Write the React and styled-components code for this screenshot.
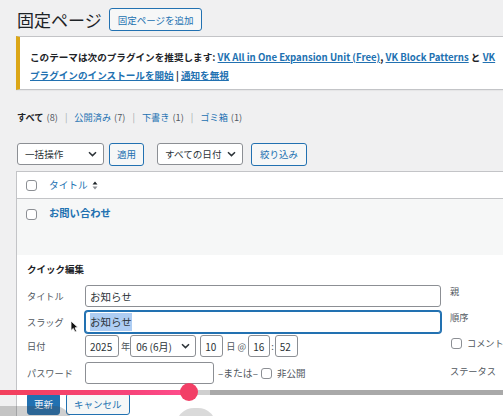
import React from "react";
import styled, { createGlobalStyle } from "styled-components";

const GlobalStyle = createGlobalStyle`
  html, body {
    margin: 0;
    padding: 0;
    background: #f0f0f1;
    overflow: hidden;
    width: 503px;
    height: 416px;
  }
  body {
    font-family: "Noto Sans CJK JP", "Noto Sans", sans-serif;
    color: #1d2327;
    -webkit-font-smoothing: antialiased;
  }
`;

const Screen = styled.div`
  position: relative;
  width: 503px;
  height: 416px;
  overflow: hidden;
`;

const Wrap = styled.div`
  width: 640px;
  padding-left: 16px;
  box-sizing: border-box;
`;

const HeaderRow = styled.div`
  display: flex;
  align-items: center;
  gap: 7px;
  height: 23px;
  margin-top: 8px;
`;

const PageTitle = styled.h1`
  margin: 0 0 0 1px;
  font-size: 17px;
  line-height: 23px;
  font-weight: 400;
  color: #1d2327;
`;

const Button = styled.span`
  display: inline-flex;
  align-items: center;
  justify-content: center;
  box-sizing: border-box;
  height: ${(p) => p.$h || 22}px;
  padding: 0 ${(p) => p.$px || 7}px;
  border: 1px solid #2271b1;
  border-radius: 3px;
  background: ${(p) => (p.$primary ? "#2271b1" : "#f6f7f7")};
  color: ${(p) => (p.$primary ? "#fff" : "#2271b1")};
  font-size: ${(p) => p.$fs || 9.5}px;
  white-space: nowrap;
  margin-left: ${(p) => p.$ml || 0}px;
`;

const Notice = styled.div`
  margin-top: 5px;
  background: #fff;
  border: 1px solid #c3c4c7;
  border-left: 4px solid #dba617;
  padding: 11px 10px 5px 10px;
  box-shadow: 0 1px 1px rgba(0, 0, 0, 0.04);
`;

const NoticeLine = styled.div`
  font-size: 9.6px;
  line-height: 18px;
  font-weight: 700;
  white-space: nowrap;
  color: #1d2327;
`;

const Link = styled.a`
  color: #2271b1;
  text-decoration: underline;
`;

const Subsub = styled.div`
  margin-top: 20px;
  margin-left: 1px;
  font-size: 9.2px;
  line-height: 14px;
  color: #50575e;
  white-space: nowrap;
  display: flex;
  gap: 5px;
`;

const SubLink = styled.span`
  color: ${(p) => (p.$current ? "#1d2327" : "#2271b1")};
  font-weight: ${(p) => (p.$current ? 700 : 400)};
`;

const Count = styled.span`
  color: #50575e;
  margin-left: 3px;
`;

const Sep = styled.span`
  color: #a7aaad;
  margin: 0 2px;
`;

const TableNav = styled.div`
  display: flex;
  align-items: center;
  margin-top: 19px;
  margin-left: 1px;
  height: 22px;
`;

const Select = styled.div`
  display: flex;
  align-items: center;
  justify-content: space-between;
  box-sizing: border-box;
  width: ${(p) => p.$w}px;
  height: ${(p) => p.$h || 22}px;
  padding: 0 ${(p) => p.$pr || 6}px 0 ${(p) => p.$pl || 7}px;
  margin-left: ${(p) => p.$ml || 0}px;
  margin-right: ${(p) => p.$mr || 0}px;
  border: 1px solid #8c8f94;
  border-radius: 3px;
  background: #fff;
  color: #2c3338;
  font-size: ${(p) => p.$fs || 9.6}px;
  white-space: nowrap;
  flex: none;
`;

const Chevron = () => (
  <svg width="9" height="6" viewBox="0 0 9 6" fill="none">
    <path d="M1 1.2 L4.5 4.6 L8 1.2" stroke="#2c3338" strokeWidth="1.5" />
  </svg>
);

const Table = styled.div`
  margin-top: 6px;
  background: #fff;
  border: 1px solid #c3c4c7;
  border-bottom: none;
`;

const HeadRow = styled.div`
  display: flex;
  align-items: center;
  height: 26px;
  padding-left: 9px;
  border-bottom: 1px solid #c3c4c7;
  background: #fff;
`;

const DataRow = styled.div`
  height: 56px;
  background: #f6f7f7;
  padding-left: 9px;
  padding-top: 8px;
  box-sizing: border-box;
  display: flex;
  align-items: flex-start;
`;

const Check = styled.span`
  display: inline-block;
  box-sizing: border-box;
  width: 11px;
  height: 11px;
  border: 1px solid #8c8f94;
  border-radius: 3px;
  background: #fff;
  flex: none;
  margin-top: ${(p) => p.$mt || 0}px;
  margin-left: ${(p) => p.$ml || 0}px;
`;

const HeadTitle = styled.span`
  margin-left: 12px;
  color: #2271b1;
  font-size: 9.7px;
  display: inline-flex;
  align-items: center;
  gap: 4px;
`;

const RowTitle = styled.span`
  margin-left: 12px;
  color: #2271b1;
  font-size: 10.3px;
  font-weight: 700;
  line-height: 14px;
  margin-top: -1px;
`;

const SortIcon = () => (
  <svg width="6" height="9" viewBox="0 0 6 9">
    <path d="M0.5 3.6 L3 0.5 L5.5 3.6 Z" fill="#1d2327" />
    <path d="M0.5 5.4 L3 8.5 L5.5 5.4 Z" fill="#8c8f94" />
  </svg>
);

const QuickEdit = styled.div`
  background: #fff;
  padding: 7px 0 0 10px;
  height: 170px;
  box-sizing: border-box;
`;

const QuickHeading = styled.div`
  font-size: 9.5px;
  font-weight: 700;
  line-height: 14px;
  color: #1d2327;
`;

const EditGrid = styled.div`
  display: flex;
  margin-top: 9px;
`;

const LeftCol = styled.div`
  width: 414px;
  flex: none;
`;

const RightCol = styled.div`
  margin-left: 9px;
`;

const FieldRow = styled.div`
  display: flex;
  align-items: center;
  height: 22px;
  margin-bottom: ${(p) => p.$mb ?? 4}px;
`;

const Label = styled.span`
  width: 58px;
  flex: none;
  font-size: 9.2px;
  color: #50575e;
  white-space: nowrap;
`;

const TextBox = styled.div`
  display: flex;
  align-items: center;
  box-sizing: border-box;
  width: ${(p) => p.$w}px;
  height: 22px;
  padding: 0 ${(p) => p.$px || 4}px;
  margin-left: ${(p) => p.$ml || 0}px;
  border: 1px solid ${(p) => (p.$focus ? "#2271b1" : "#8c8f94")};
  box-shadow: ${(p) => (p.$focus ? "0 0 0 1px #2271b1" : "none")};
  border-radius: 3px;
  background: #fff;
  color: #2c3338;
  font-size: ${(p) => p.$fs || 10.5}px;
  white-space: nowrap;
  flex: none;
`;

const Selected = styled.span`
  background: #aecdf3;
  line-height: 18px;
`;

const Inline = styled.span`
  font-size: ${(p) => p.$fs || 9.2}px;
  color: #50575e;
  margin: 0 ${(p) => p.$mr ?? 2}px 0 ${(p) => p.$ml ?? 2}px;
  white-space: nowrap;
  flex: none;
`;

const SideItem = styled.div`
  display: flex;
  align-items: center;
  gap: 5px;
  font-size: 9.2px;
  color: #50575e;
  height: 14px;
  margin-top: ${(p) => p.$mt || 0}px;
  white-space: nowrap;
`;

const Actions = styled.div`
  display: flex;
  gap: 6px;
  margin-top: 5px;
`;

/* video player overlay along the bottom */
const Progress = styled.div`
  position: absolute;
  left: 0;
  right: 0;
  top: 390px;
  height: 5px;
  display: flex;
`;

const Played = styled.div`
  width: 189px;
  background: linear-gradient(90deg, #f2405c 0%, #f7447a 70%, #ff4e8e 100%);
`;

const Buffered = styled.div`
  width: 21px;
  background: #cfcfcf;
`;

const Remaining = styled.div`
  flex: 1;
  background: #a9a9a9;
`;

const Scrubber = styled.div`
  position: absolute;
  left: 180px;
  top: 383px;
  width: 18px;
  height: 18px;
  border-radius: 50%;
  background: #f23f66;
`;

const ControlPill = styled.div`
  position: absolute;
  left: ${(p) => p.$x}px;
  top: ${(p) => p.$y}px;
  width: ${(p) => p.$w}px;
  height: 40px;
  border-radius: 18px;
  background: rgba(70, 70, 70, ${(p) => p.$a});
`;

const Cursor = styled.svg`
  position: absolute;
  left: 70px;
  top: 320px;
`;

export default function App() {
  return (
    <Screen>
      <GlobalStyle />
      <Wrap>
        <HeaderRow>
          <PageTitle>固定ページ</PageTitle>
          <Button $h={23} $px={8}>固定ページを追加</Button>
        </HeaderRow>

        <Notice>
          <NoticeLine>
            このテーマは次のプラグインを推奨します:{" "}
            <Link>VK All in One Expansion Unit (Free)</Link>,{" "}
            <Link>VK Block Patterns</Link> と <Link>VK</Link>
          </NoticeLine>
          <NoticeLine>
            <Link>プラグインのインストールを開始</Link> | <Link>通知を無視</Link>
          </NoticeLine>
        </Notice>

        <Subsub>
          <span>
            <SubLink $current>すべて</SubLink>
            <Count>(8)</Count>
          </span>
          <Sep>|</Sep>
          <span>
            <SubLink>公開済み</SubLink>
            <Count>(7)</Count>
          </span>
          <Sep>|</Sep>
          <span>
            <SubLink>下書き</SubLink>
            <Count>(1)</Count>
          </span>
          <Sep>|</Sep>
          <span>
            <SubLink>ゴミ箱</SubLink>
            <Count>(1)</Count>
          </span>
        </Subsub>

        <TableNav>
          <Select $w={87} $mr={5}>
            一括操作
            <Chevron />
          </Select>
          <Button $h={23} $px={7}>適用</Button>
          <Select $w={86} $ml={13} $mr={8}>
            すべての日付
            <Chevron />
          </Select>
          <Button $h={23} $px={8}>絞り込み</Button>
        </TableNav>

        <Table>
          <HeadRow>
            <Check />
            <HeadTitle>
              タイトル
              <SortIcon />
            </HeadTitle>
          </HeadRow>
          <DataRow>
            <Check $mt={2} />
            <RowTitle>お問い合わせ</RowTitle>
          </DataRow>

          <QuickEdit>
            <QuickHeading>クイック編集</QuickHeading>
            <EditGrid>
              <LeftCol>
                <FieldRow>
                  <Label>タイトル</Label>
                  <TextBox $w={356}>お知らせ</TextBox>
                </FieldRow>
                <FieldRow $mb={2}>
                  <Label>スラッグ</Label>
                  <TextBox $w={356} $focus>
                    <Selected>お知らせ</Selected>
                  </TextBox>
                </FieldRow>
                <FieldRow $mb={5}>
                  <Label>日付</Label>
                  <TextBox $w={34} $fs={10}>2025</TextBox>
                  <Inline $ml={2} $mr={0}>年</Inline>
                  <Select $w={66} $pl={5} $pr={5} $fs={10}>
                    06 (6月)
                    <Chevron />
                  </Select>
                  <TextBox $w={23} $fs={10} $ml={4}>10</TextBox>
                  <Inline $ml={3} $mr={2}>日 @</Inline>
                  <TextBox $w={22} $fs={10}>16</TextBox>
                  <Inline $ml={1} $mr={1}>:</Inline>
                  <TextBox $w={23} $fs={10}>52</TextBox>
                </FieldRow>
                <FieldRow>
                  <Label>パスワード</Label>
                  <TextBox $w={129} />
                  <Inline $ml={4} $mr={3} $fs={9.8}>–または–</Inline>
                  <Check />
                  <Inline $ml={5} $fs={9.5}>非公開</Inline>
                </FieldRow>
              </LeftCol>
              <RightCol>
                <SideItem $mt={-1}>親</SideItem>
                <SideItem $mt={12}>順序</SideItem>
                <SideItem $mt={12}>
                  <Check $ml={1} />
                  コメント
                </SideItem>
                <SideItem $mt={14}>ステータス</SideItem>
              </RightCol>
            </EditGrid>
            <Actions>
              <Button $primary $h={22} $px={6}>更新</Button>
              <Button $h={22} $px={7}>キャンセル</Button>
            </Actions>
          </QuickEdit>
        </Table>
      </Wrap>

      <Cursor width="9" height="13" viewBox="0 0 9 13">
        <path
          d="M1 1 L1 10.5 L3.3 8.4 L5 12 L6.6 11.3 L5 7.8 L8 7.6 Z"
          fill="#111"
          stroke="#fff"
          strokeWidth="0.8"
        />
      </Cursor>

      <Progress>
        <Played />
        <Buffered />
        <Remaining />
      </Progress>
      <Scrubber />
      <ControlPill $x={-22} $y={406} $w={94} $a={0.26} />
      <ControlPill $x={176} $y={408} $w={40} $a={0.2} />
    </Screen>
  );
}
